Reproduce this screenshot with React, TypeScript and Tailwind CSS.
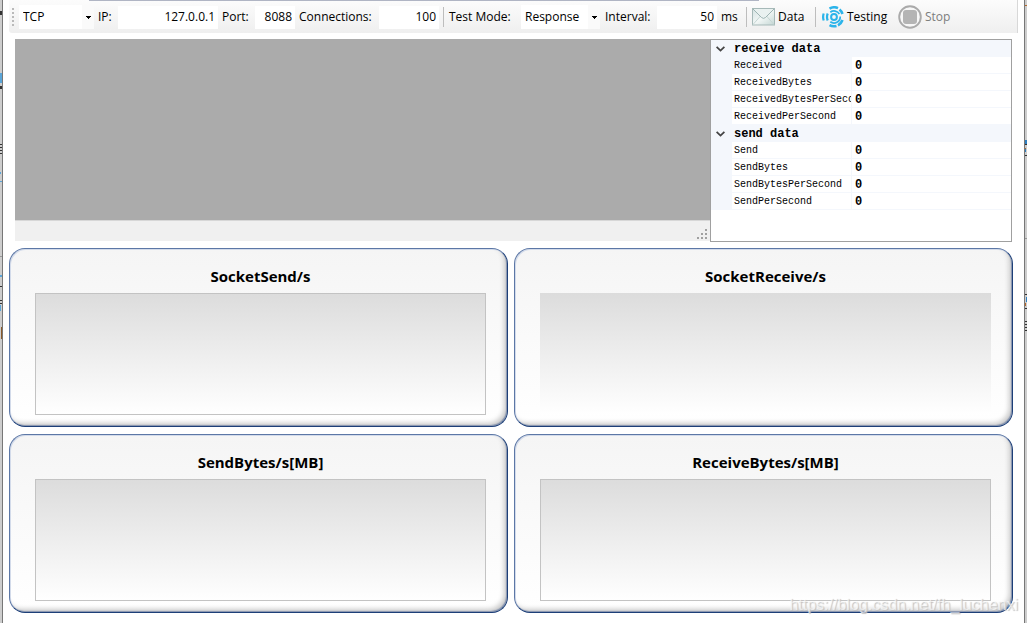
import { useState } from 'react';
import clsx from 'clsx';

const groups = [
  {
    title: 'receive data',
    rows: ['Received', 'ReceivedBytes', 'ReceivedBytesPerSecond', 'ReceivedPerSecond'],
  },
  {
    title: 'send data',
    rows: ['Send', 'SendBytes', 'SendBytesPerSecond', 'SendPerSecond'],
  },
];

const charts = [
  { title: 'SocketSend/s', framed: true },
  { title: 'SocketReceive/s', framed: false },
  { title: 'SendBytes/s[MB]', framed: true },
  { title: 'ReceiveBytes/s[MB]', framed: true },
];

function Separator({ className }: { className?: string }) {
  return <div className={clsx('h-5 w-px shrink-0 bg-[#bdbdbd]', className)} />;
}

function Field({ id, label, value, labelClass, inputClass }: {
  id: string;
  label: string;
  value: string;
  labelClass: string;
  inputClass: string;
}) {
  return (
    <div className="flex shrink-0 items-center">
      <label htmlFor={id} className={clsx('whitespace-nowrap', labelClass)}>{label}</label>
      <input
        id={id}
        defaultValue={value}
        className={clsx('h-[23px] bg-white pr-[3px] pb-px text-right outline-none', inputClass)}
      />
    </div>
  );
}

function Combo({ id, label, options, className }: {
  id: string;
  label: string;
  options: string[];
  className: string;
}) {
  return (
    <div className={clsx('relative shrink-0', className)}>
      <select
        id={id}
        aria-label={label}
        className="h-6 w-full appearance-none bg-white pl-1 outline-none"
      >
        {options.map((o) => <option key={o}>{o}</option>)}
      </select>
      <div className="pointer-events-none absolute inset-y-0 right-0 flex w-3 items-center justify-center bg-[#fafafa]">
        <svg width="5" height="3" viewBox="0 0 5 3" shapeRendering="crispEdges">
          <path d="M0 0h5v1H4v1H3v1H2V2H1V1H0z" fill="#000" />
        </svg>
      </div>
    </div>
  );
}

function MailIcon() {
  return (
    <svg width="23" height="18" viewBox="0 0 23 18">
      <defs>
        <linearGradient id="mail" x1="0" y1="0" x2="1" y2="1">
          <stop offset="0" stopColor="#d3e1e1" />
          <stop offset="0.5" stopColor="#f2f7f6" />
          <stop offset="1" stopColor="#c4d7d4" />
        </linearGradient>
      </defs>
      <rect x="0.5" y="0.5" width="22" height="16.5" fill="url(#mail)" stroke="#a6b9b8" />
      <path d="M1 16.5 8.5 8M22 16.5 14.500 8" fill="none" stroke="#c6d6d4" />
      <path d="M1 1 9.500 9.500Q11.500 11.300 13.500 9.500L22 1" fill="#e9f1f0" stroke="#9db4b3" />
    </svg>
  );
}

function TestingIcon() {
  return (
    <svg width="22" height="22" viewBox="0 0 22 22" fill="none" stroke="#2cb4ea">
      <circle cx="12" cy="11" r="2.900" strokeWidth="2" />
      <path d="M8.300 6.200A6.200 6.200 0 0 1 17.400 8M18.200 10.500A6.200 6.200 0 0 1 8.300 15.800" strokeWidth="1.700" />
      <path d="M7.500 2.600A9.500 9.500 0 0 1 16 2.100M17.500 3.500A9.300 9.300 0 0 1 20.500 8M20.500 14A9.300 9.300 0 0 1 16 19.300M14.500 19.900A9.300 9.300 0 0 1 7.500 19.200" strokeWidth="2.600" />
      <path d="M5.700 7.500Q4.300 11 5.700 14.500M1.700 7.500Q0.500 11 1.700 14.500" strokeWidth="2.200" />
    </svg>
  );
}

function StopIcon() {
  return (
    <svg width="24" height="24" viewBox="0 0 24 24">
      <circle cx="12" cy="12" r="10.800" fill="#f7f7f7" stroke="#aaa" strokeWidth="1.900" />
      <rect x="5" y="5" width="14" height="14" rx="3" fill="#b4b4b4" />
    </svg>
  );
}

function Toolbar() {
  return (
    <div className="mx-[6px] flex h-[33px] items-center overflow-hidden rounded-bl-[3px] border-r border-[#d8d8d8] bg-linear-to-b from-[#fcfcfc] to-[#efefef] pt-px pl-[3px] text-[12px] leading-4">
      <svg width="2" height="18" viewBox="0 0 2 18" className="mr-[5px] shrink-0" fill="#b9b9b9" shapeRendering="crispEdges">
        {[0, 4, 8, 12, 16].map((y) => <rect key={y} y={y} width="2" height="2" />)}
      </svg>
      <Combo id="protocol" label="Protocol" options={['TCP', 'UDP']} className="w-[75px]" />
      <Field id="ip" label="IP:" value="127.0.0.1" labelClass="w-6 pl-1" inputClass="w-[100px]" />
      <Field id="port" label="Port:" value="8088" labelClass="w-[37px] pl-1" inputClass="w-10" />
      <Field id="connections" label="Connections:" value="100" labelClass="w-[84px] pl-1" inputClass="w-[60px]" />
      <Separator className="mx-1" />
      <label htmlFor="mode" className="w-[73px] shrink-0 pl-px whitespace-nowrap">Test Mode:</label>
      <Combo id="mode" label="Test Mode" options={['Response', 'Request']} className="w-[79px]" />
      <Field id="interval" label="Interval:" value="50" labelClass="w-[57px] pl-[5px]" inputClass="w-[60px]" />
      <span className="w-[29px] shrink-0 pl-1">ms</span>
      <Separator />
      <button className="ml-[5px] flex w-[63px] shrink-0 items-center gap-[3px]">
        <MailIcon />
        Data
      </button>
      <Separator />
      <button className="ml-[6px] flex w-[76px] shrink-0 items-center gap-[3px]">
        <TestingIcon />
        Testing
      </button>
      <button disabled className="flex shrink-0 items-center gap-[3px] text-[#7d7d7d]">
        <StopIcon />
        Stop
      </button>
    </div>
  );
}

function LogPane() {
  return (
    <div className="flex flex-1 flex-col pb-px">
      <div className="flex-1 bg-[#ababab]" />
      <div className="flex h-[21px] items-end justify-end border-t border-[#d7d7d7] bg-[#f0f0f0] pr-[3px] pb-[2px]">
        <svg width="10" height="10" viewBox="0 0 10 10" fill="#a0a0a0" shapeRendering="crispEdges">
          <path d="M8 0h2v2H8zM4 4h2v2H4zM8 4h2v2H8zM0 8h2v2H0zM4 8h2v2H4zM8 8h2v2H8z" />
        </svg>
      </div>
    </div>
  );
}

function PropertyGrid() {
  const [closed, setClosed] = useState<string[]>([]);
  const toggle = (title: string) =>
    setClosed((c) => (c.includes(title) ? c.filter((t) => t !== title) : [...c, title]));

  return (
    <div className="w-[302px] shrink-0 border border-[#a0a0a0] bg-white font-['Liberation_Mono',monospace]">
      <table className="w-full table-fixed border-separate border-spacing-0 text-[10px] leading-4">
        <colgroup>
          <col className="w-[21px]" />
          <col className="w-[120px]" />
          <col />
        </colgroup>
        {groups.map((group) => (
          <tbody key={group.title}>
            <tr className="bg-[#f4f7fc]">
              <th colSpan={3} className="p-0 text-left">
                <button
                  onClick={() => toggle(group.title)}
                  className="flex h-[17px] w-full items-center gap-[9px] pl-[5px] text-[12px] leading-4 font-bold"
                >
                  <svg width="9" height="6" viewBox="0 0 9 6" fill="none" stroke="#444" strokeWidth="1.800">
                    <path d="M0.600 0.800 4.500 4.600 8.400 0.800" />
                  </svg>
                  {group.title}
                </button>
              </th>
            </tr>
            {!closed.includes(group.title) && group.rows.map((name) => (
              <tr key={name}>
                <td className="bg-[#f4f7fc] p-0" />
                <th
                  scope="row"
                  className={clsx(
                    'border-r border-b border-[#f4f7fc] p-0 text-left font-normal',
                    name === 'Received' && 'bg-[#f4f7fc]',
                  )}
                >
                  <div className="h-4 overflow-hidden pl-[2px] leading-[18px] whitespace-nowrap">{name}</div>
                </th>
                <td className="border-b border-[#f4f7fc] p-0 text-[12px] font-bold">
                  <div className="h-4 pl-[3px] leading-[18px]">0</div>
                </td>
              </tr>
            ))}
          </tbody>
        ))}
      </table>
    </div>
  );
}

function ChartPanel({ title, framed }: { title: string; framed: boolean }) {
  return (
    <section className="rounded-[16px] border border-t-[#5c77a6] border-r-[#1d3f78] border-b-[#1d3f78] border-l-[#5c77a6] bg-linear-to-b from-[#f5f5f5] to-white pt-4 pr-[21px] pb-[11px] pl-[25px] shadow-[inset_1px_1px_0_#d3dbea,inset_-1px_-1px_1px_#8593ae,inset_-4px_-4px_5px_-1px_#cacaca]">
      <h2 className="text-center text-[15px] leading-[22px] font-bold">{title}</h2>
      <div
        className={clsx(
          'mt-[6px] h-[122px] border bg-linear-to-b from-[#dcdcdc] to-white bg-origin-border',
          framed ? 'border-[#c3c3c3]' : 'border-transparent',
        )}
      />
    </section>
  );
}

// slivers of the windows lying behind this one
function LeftEdge() {
  return (
    <svg width="2" height="623" className="absolute top-0 left-0" shapeRendering="crispEdges">
      <path d="M0 11h2v4H0zM0 86h2v3H0zM0 144h2v1H0zM0 147h2v1H0zM0 150h2v1H0zM0 153h2v1H0zM0 286h2v1H0zM0 300h2v1H0zM0 303h2v1H0z" fill="#333" />
      <path d="M0 73h2v10H0zM0 172h1v2H0zM0 181h2v1H0zM0 275h2v2H0zM0 305h1v6H0z" fill="#5aa5d8" />
      <path d="M1 327h1v12H1z" fill="#8a5a2b" />
      <path d="M0 256h2v1H0z" fill="#999" />
    </svg>
  );
}

function RightEdge() {
  return (
    <svg width="2" height="623" className="absolute top-0 right-0" shapeRendering="crispEdges">
      <path d="M0 144h2v1H0zM0 155h2v1H0zM0 294h2v1H0zM0 308h2v1H0zM0 321h2v1H0zM0 324h2v1H0zM0 327h2v1H0zM0 330h2v1H0z" fill="#333" />
      <path d="M0 140h2v4H0zM0 149h1v3H0zM1 297h1v5H1z" fill="#2f7fc0" />
      <path d="M0 5h2v1H0zM0 148h1v1H0zM0 303h1v3H0z" fill="#b36a2e" />
      <path d="M0 238h2v1H0z" fill="#999" />
    </svg>
  );
}

export default function App() {
  return (
    <div className="relative min-h-screen bg-[#cdcdcd] px-[2px] font-['Open_Sans','Noto_Sans',sans-serif] text-black">
      <LeftEdge />
      <RightEdge />
      <div className="min-h-screen border-x border-[#777] bg-white">
        <div className="absolute top-0 left-[89px] h-px w-[670px] bg-[#b0b5c4]" />
        <Toolbar />
        <main>
          <div className="mt-[6px] mr-3 ml-3 flex min-h-[203px]">
            <LogPane />
            <PropertyGrid />
          </div>
          <div className="mt-[6px] mr-[11px] ml-[6px] grid grid-cols-2 gap-x-[6px] gap-y-[7px]">
            {charts.map((c) => <ChartPanel key={c.title} {...c} />)}
          </div>
        </main>
      </div>
      <div className="pointer-events-none absolute right-[9px] bottom-[9px] font-['Liberation_Sans',sans-serif] text-[16px] leading-[18px] whitespace-nowrap text-white/60 [text-shadow:1px_1px_1px_#c0c0c0]">
        https://blog.csdn.net/fh_luchenxi
      </div>
    </div>
  );
}
